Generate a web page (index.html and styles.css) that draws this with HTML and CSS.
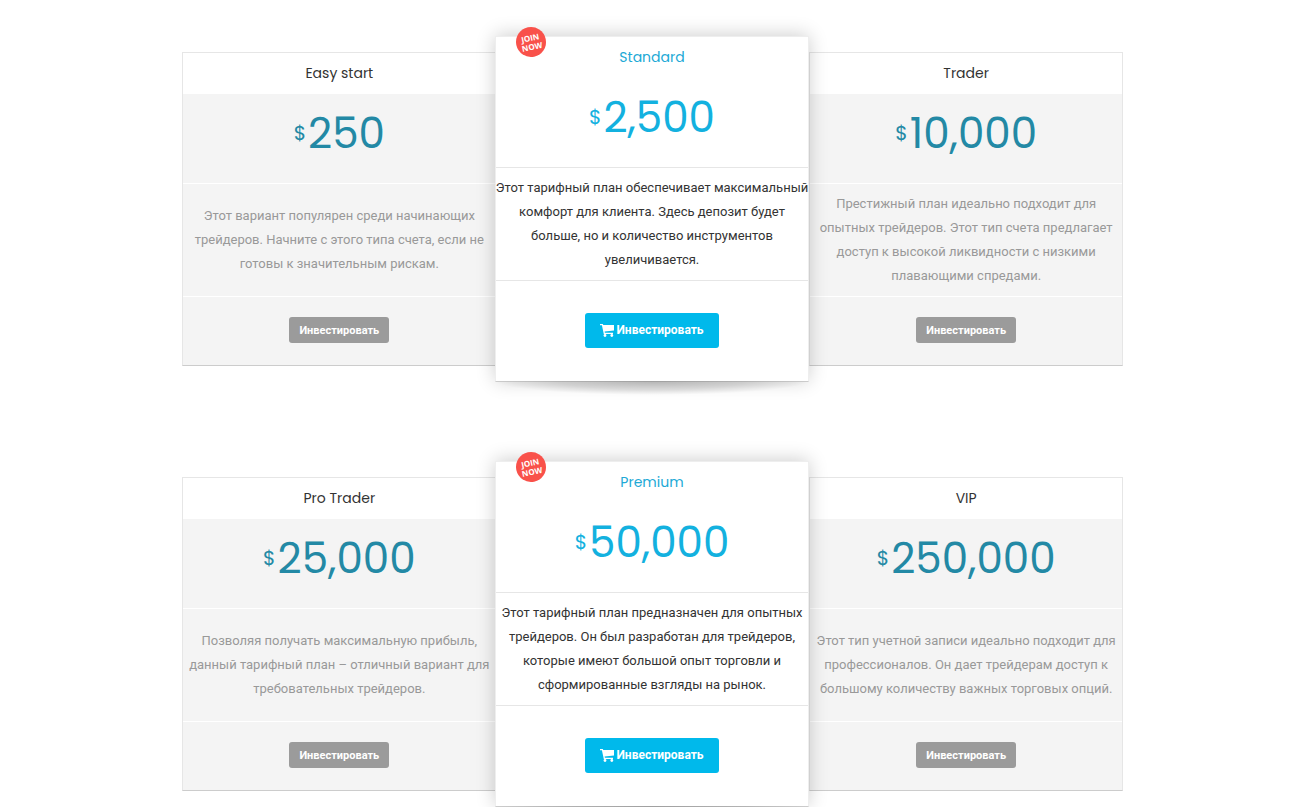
FILE: index.html
```
<!DOCTYPE html>
<html lang="ru">
<head>
    <meta charset="UTF-8">
    <meta name="viewport" content="width=device-width, initial-scale=1.0">
    <title>Тарифные планы</title>
    <link rel="stylesheet" href="styles.css">
</head>
<body>
    <main class="container">
        <section class="pricing">
            <article class="plan">
                <h3 class="plan-title">Easy start</h3>
                <div class="plan-price"><span class="currency">$</span>250</div>
                <p class="plan-text">Этот вариант популярен среди начинающих трейдеров. Начните с этого типа счета, если не готовы к значительным рискам.</p>
                <div class="plan-footer"><button type="button" class="btn">Инвестировать</button></div>
            </article>

            <!-- highlighted plan, a bit taller than its neighbours -->
            <article class="plan featured">
                <span class="badge">JOIN<br>NOW</span>
                <h3 class="plan-title">Standard</h3>
                <div class="plan-price"><span class="currency">$</span>2,500</div>
                <p class="plan-text">Этот тарифный план обеспечивает максимальный комфорт для клиента. Здесь депозит будет больше, но и количество инструментов увеличивается.</p>
                <div class="plan-footer">
                    <button type="button" class="btn btn-primary">
                        <svg class="cart" viewBox="0 0 14 13" aria-hidden="true">
                            <path d="M0 0h2.8l.5 1H14v5.4L4.6 7.6l.3 1.2H13V10H3.8L1.9 1.3H0z"/>
                            <circle cx="5" cy="11.5" r="1.4"/>
                            <circle cx="11.8" cy="11.5" r="1.4"/>
                        </svg>
                        Инвестировать
                    </button>
                </div>
            </article>

            <article class="plan">
                <h3 class="plan-title">Trader</h3>
                <div class="plan-price"><span class="currency">$</span>10,000</div>
                <p class="plan-text">Престижный план идеально подходит для опытных трейдеров. Этот тип счета предлагает доступ к высокой ликвидности с низкими плавающими спредами.</p>
                <div class="plan-footer"><button type="button" class="btn">Инвестировать</button></div>
            </article>
        </section>

        <section class="pricing">
            <article class="plan">
                <h3 class="plan-title">Pro Trader</h3>
                <div class="plan-price"><span class="currency">$</span>25,000</div>
                <p class="plan-text">Позволяя получать максимальную прибыль, данный тарифный план – отличный вариант для требовательных трейдеров.</p>
                <div class="plan-footer"><button type="button" class="btn">Инвестировать</button></div>
            </article>

            <article class="plan featured">
                <span class="badge">JOIN<br>NOW</span>
                <h3 class="plan-title">Premium</h3>
                <div class="plan-price"><span class="currency">$</span>50,000</div>
                <p class="plan-text">Этот тарифный план предназначен для опытных трейдеров. Он был разработан для трейдеров, которые имеют большой опыт торговли и сформированные взгляды на рынок.</p>
                <div class="plan-footer">
                    <button type="button" class="btn btn-primary">
                        <svg class="cart" viewBox="0 0 14 13" aria-hidden="true">
                            <path d="M0 0h2.8l.5 1H14v5.4L4.6 7.6l.3 1.2H13V10H3.8L1.9 1.3H0z"/>
                            <circle cx="5" cy="11.5" r="1.4"/>
                            <circle cx="11.8" cy="11.5" r="1.4"/>
                        </svg>
                        Инвестировать
                    </button>
                </div>
            </article>

            <article class="plan">
                <h3 class="plan-title">VIP</h3>
                <div class="plan-price"><span class="currency">$</span>250,000</div>
                <p class="plan-text">Этот тип учетной записи идеально подходит для профессионалов. Он дает трейдерам доступ к большому количеству важных торговых опций.</p>
                <div class="plan-footer"><button type="button" class="btn">Инвестировать</button></div>
            </article>
        </section>
    </main>
</body>
</html>
```
FILE: styles.css
```
* {
    box-sizing: border-box;
}
body {
    margin: 0;
    padding: 52px 0 16px 9px;
    background: #fff;
    font-family: Roboto, "Liberation Sans", sans-serif;
    font-size: 13px;
    line-height: 24px;
    color: #333;
}
.container {
    max-width: 941px;
    margin: 0 auto;
}
.pricing {
    display: grid;
    grid-template-columns: repeat(3, 1fr);
}
.pricing + .pricing {
    margin-top: 111px;
}
.plan {
    display: flex;
    flex-direction: column;
    border: 1px solid #e6e6e6;
    border-bottom-color: #ccc;
    background: #f4f4f4;
    text-align: center;
}
.plan:first-child {
    border-right: 0;
}
.plan-title {
    margin: 0;
    padding: 8px 10px;
    background: #fff;
    font-family: Poppins, Lato, sans-serif;
    font-size: 14px;
    font-weight: 400;
    line-height: 25px;
}
.plan-price {
    height: 90px;
    border-bottom: 1px solid #fff;
    font-family: Poppins, Lato, sans-serif;
    font-size: 42px;
    line-height: 80px;
    color: #2389a5;
}
.currency {
    margin-right: 2px;
    font-size: 20px;
    line-height: 20px;
    vertical-align: 8px;
}
.plan-text {
    display: flex;
    align-items: center;
    justify-content: center;
    min-height: 113px;
    margin: 0;
    padding: 8px 0;
    border-bottom: 1px solid #fff;
    color: #999;
}
.plan-footer {
    display: flex;
    flex: 1;
    align-items: center;
    justify-content: center;
    min-height: 68px;
    padding-bottom: 2px;
}
.btn {
    height: 26px;
    padding: 0 10px;
    border: 0;
    border-radius: 3px;
    background: #9b9b9b;
    color: #fff;
    font-family: inherit;
    font-size: 11px;
    font-weight: 700;
    cursor: pointer;
}

/* middle plan */
.featured {
    position: relative;
    z-index: 1;
    margin: -16px 0 -16px -1px;
    border-color: #eee;
    border-bottom-color: #ccc;
    background: #fff;
    box-shadow: 0 -1px 18px rgba(0, 0, 0, 0.2);
}
.featured .plan-title {
    color: #21a9d6;
}
.featured .plan-price {
    border-color: #e6e6e6;
    color: #13b1df;
}
.featured .plan-text {
    border-color: #e6e6e6;
    color: #333;
}
/* curved shadow under the card */
.featured::after {
    content: "";
    position: absolute;
    top: 100%;
    left: 0;
    right: 0;
    height: 14px;
    background: radial-gradient(farthest-side at 50% 0, rgba(0, 0, 0, 0.22), rgba(0, 0, 0, 0.12) 60%, rgba(0, 0, 0, 0));
}
.badge {
    position: absolute;
    top: -10px;
    left: 20px;
    width: 30px;
    height: 30px;
    padding-top: 6px;
    border-radius: 50%;
    background: #f9514a;
    color: #fff;
    font-family: "Open Sans", sans-serif;
    font-size: 8px;
    font-weight: 700;
    line-height: 9px;
    transform: rotate(-12deg);
}
.btn-primary {
    display: flex;
    align-items: center;
    gap: 2px;
    height: 35px;
    padding: 0 15px;
    background: #00b9eb;
    font-size: 12px;
}
.cart {
    width: 14px;
    height: 13px;
    fill: #fff;
}
```
